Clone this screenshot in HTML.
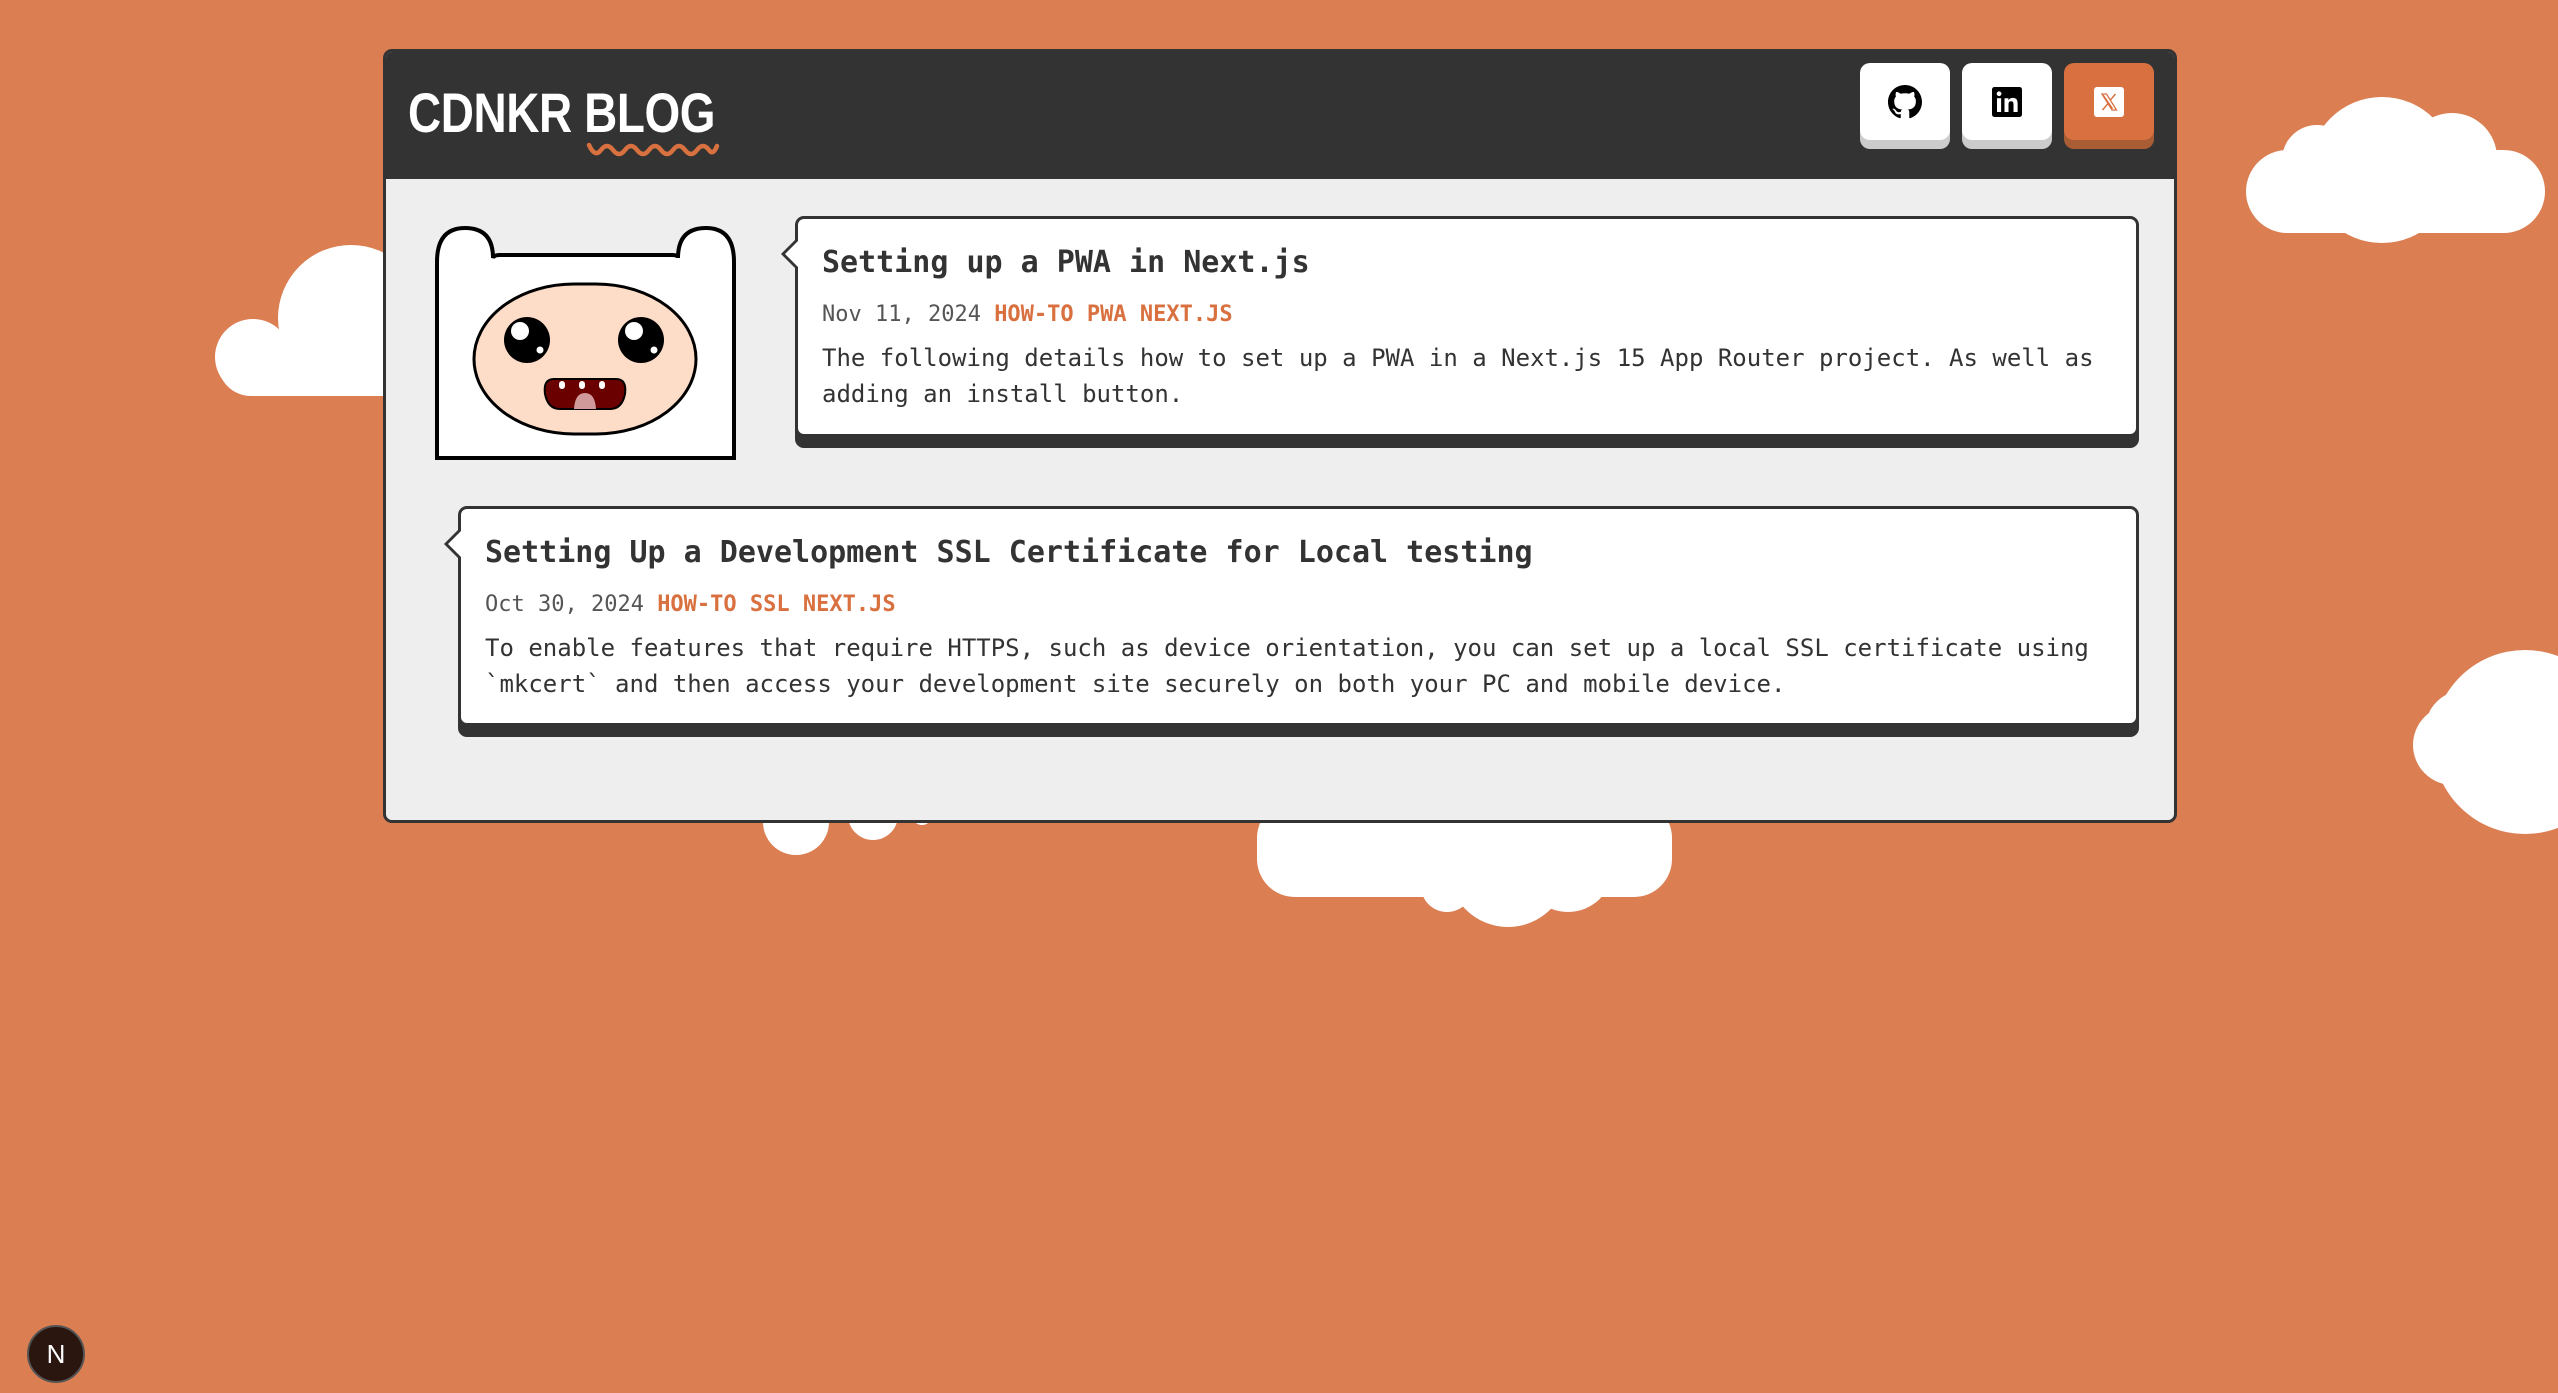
<!DOCTYPE html>
<html><head><meta charset="utf-8"><style>
*{box-sizing:border-box;margin:0;padding:0}
body{width:2558px;height:1393px;background:#db7e52;position:relative;overflow:hidden;font-family:"DejaVu Sans Mono","Liberation Mono",monospace}
.c{position:absolute;background:#fff;border-radius:50%}
.r{position:absolute;background:#fff}
#card{position:absolute;left:383px;top:49px;width:1794px;height:774px;background:#eee;border:3px solid #333;border-radius:9px;overflow:hidden}
#hdr{position:absolute;left:0;top:0;right:0;height:127px;background:#333}
#title{position:absolute;left:22px;top:28px;font-family:"Liberation Sans",sans-serif;font-weight:bold;font-size:56px;color:#fff;transform:scaleX(.82);transform-origin:left;letter-spacing:-0.5px}
.btn{position:absolute;top:11px;width:90px;height:77px;border-radius:10px;background:#fff;box-shadow:0 9px 0 #ccc;display:flex;align-items:center;justify-content:center}
.post{position:absolute;background:#fff;border:3px solid #333;border-radius:9px;box-shadow:0 11px 0 #333}
.post h2{font-size:30px;font-weight:bold;color:#333}
.meta{font-size:22px;color:#555;margin-top:22px}
.meta b{color:#d9703f}
.desc{font-size:24px;color:#333;line-height:36px;margin-top:13px}
.tail{position:absolute;left:-17px;width:0;height:0;border-top:17px solid transparent;border-bottom:17px solid transparent;border-right:17px solid #333}
.tail i{position:absolute;left:4px;top:-13px;border-top:13px solid transparent;border-bottom:13px solid transparent;border-right:13px solid #fff}
</style></head><body>
<div class="c" style="left:278px;top:245px;width:146px;height:146px"></div>
<div class="c" style="left:215px;top:319px;width:76px;height:76px"></div>
<div class="r" style="left:218px;top:330px;width:220px;height:66px;border-radius:38px"></div>
<div class="c" style="left:2309px;top:97px;width:146px;height:146px"></div>
<div class="c" style="left:2407px;top:113px;width:90px;height:90px"></div>
<div class="c" style="left:2282px;top:125px;width:70px;height:70px"></div>
<div class="r" style="left:2246px;top:150px;width:299px;height:83px;border-radius:42px"></div>
<div class="c" style="left:2433px;top:650px;width:184px;height:184px"></div>
<div class="c" style="left:2413px;top:705px;width:80px;height:80px"></div>
<div class="c" style="left:2425px;top:690px;width:80px;height:80px"></div>
<div class="r" style="left:1257px;top:800px;width:415px;height:97px;border-radius:38px"></div>
<div class="c" style="left:1421px;top:860px;width:52px;height:52px"></div>
<div class="c" style="left:1448px;top:807px;width:120px;height:120px"></div>
<div class="c" style="left:1523px;top:822px;width:90px;height:90px"></div>
<div class="c" style="left:763px;top:789px;width:66px;height:66px"></div>
<div class="c" style="left:848px;top:790px;width:50px;height:50px"></div>
<div class="c" style="left:912px;top:805px;width:20px;height:20px"></div>

<div id="card">
 <div id="hdr">
  <div id="title">CDNKR BLOG</div>
  <svg style="position:absolute;left:200px;top:88px" width="134" height="20" viewBox="0 0 134 20"><path d="M3 5 Q9 18 15 10 Q21 2 27 10 Q33 18 39 10 Q45 2 51 10 Q57 18 63 10 Q69 2 75 10 Q81 18 87 10 Q93 2 99 10 Q105 18 111 10 Q117 2 123 10 Q127 16 131 6" fill="none" stroke="#d9703f" stroke-width="4.5" stroke-linecap="round"/></svg>
  <div class="btn" style="left:1474px"><svg width="34" height="34" viewBox="0 0 16 16"><path fill="#000" d="M8 0C3.58 0 0 3.58 0 8c0 3.54 2.290 6.53 5.470 7.590.4.07.55-.17.55-.38 0-.19-.01-.82-.01-1.49-2.010.37-2.530-.49-2.690-.94-.09-.23-.48-.94-.82-1.130-.28-.15-.68-.52-.01-.53.63-.01 1.080.58 1.230.82.72 1.210 1.870.87 2.330.66.07-.52.28-.87.51-1.070-1.780-.2-3.640-.89-3.640-3.950 0-.87.31-1.590.82-2.150-.08-.2-.36-1.020.08-2.120 0 0 .67-.21 2.2.82.64-.18 1.320-.27 2-.27.68 0 1.360.09 2 .27 1.530-1.040 2.2-.82 2.2-.82.44 1.1.16 1.920.08 2.120.51.56.82 1.270.82 2.150 0 3.070-1.870 3.750-3.650 3.950.29.25.54.73.54 1.480 0 1.070-.01 1.930-.01 2.2 0 .21.15.46.55.38A8.013 8.013 0 0016 8c0-4.420-3.580-8-8-8z"/></svg></div>
  <div class="btn" style="left:1576px"><svg width="30" height="30" viewBox="0 0 24 24"><rect width="24" height="24" rx="2" fill="#000"/><rect x="4" y="9" width="3.3" height="11" fill="#fff"/><circle cx="5.65" cy="5.4" r="1.9" fill="#fff"/><path d="M10 9h3.1v1.6c.5-.9 1.7-1.9 3.5-1.9 3.3 0 3.9 2.1 3.9 4.9V20h-3.3v-5.6c0-1.3 0-3-1.9-3s-2.1 1.4-2.1 2.9V20H10z" fill="#fff"/></svg></div>
  <div class="btn" style="left:1678px;background:#d87040;box-shadow:0 9px 0 #a85d35"><svg width="30" height="30" viewBox="0 0 30 30"><rect width="30" height="30" rx="3" fill="#fff"/><path d="M8 7h4.5l10 16H18z M9.3 8.2l9.3 13.6" fill="none" stroke="#d87040" stroke-width="1.3"/><path d="M21.5 7L16.2 13.2M8.5 23l5.3-6.2" stroke="#d87040" stroke-width="1.5"/></svg></div>
 </div>
 <svg style="position:absolute;left:48px;top:174px" width="305" height="235" viewBox="0 0 305 235">
  <path d="M3 232 V36 Q3 2 31 2 Q59 2 59 32 Q60 29 66 29 H238 Q244 29 244 32 Q244 2 272 2 Q300 2 300 36 V232 Z" fill="#fff" stroke="#000" stroke-width="4"/>
  <path d="M3 38 V232 H300 V38" fill="none" stroke="#000" stroke-width="4"/>
  <rect x="40" y="58" width="222" height="150" rx="100" ry="75" fill="#fddcc8" stroke="#000" stroke-width="3"/>
  <circle cx="93" cy="114" r="23" fill="#000"/><circle cx="86" cy="105" r="9" fill="#fff"/><circle cx="106" cy="124" r="3.5" fill="#fff"/>
  <circle cx="207" cy="114" r="23" fill="#000"/><circle cx="200" cy="105" r="9" fill="#fff"/><circle cx="220" cy="124" r="3.5" fill="#fff"/>
  <path d="M120 153 H182 Q193 153 191 168 Q188 183 176 183 H126 Q114 183 111 168 Q109 153 120 153Z" fill="#6b0000" stroke="#000" stroke-width="2"/>
  <path d="M140 183 Q141 167 151 167 Q161 167 162 183Z" fill="#d09a9a"/>
  <rect x="125" y="155" width="6" height="8" rx="3" fill="#fff"/><rect x="145" y="155" width="6" height="8" rx="3" fill="#fff"/><rect x="165" y="155" width="6" height="8" rx="3" fill="#fff"/>
 </svg>
 <div class="post" style="left:409px;top:164px;width:1344px;height:221px;padding:26px 24px">
  <div class="tail" style="top:18px"><i></i></div>
  <h2>Setting up a PWA in Next.js</h2>
  <div class="meta">Nov 11, 2024 <b>HOW-TO PWA NEXT.JS</b></div>
  <div class="desc">The following details how to set up a PWA in a Next.js 15 App Router project. As well as adding an install button.</div>
 </div>
 <div class="post" style="left:72px;top:454px;width:1681px;height:220px;padding:26px 24px">
  <div class="tail" style="top:18px"><i></i></div>
  <h2>Setting Up a Development SSL Certificate for Local testing</h2>
  <div class="meta">Oct 30, 2024 <b>HOW-TO SSL NEXT.JS</b></div>
  <div class="desc">To enable features that require HTTPS, such as device orientation, you can set up a local SSL certificate using `mkcert` and then access your development site securely on both your PC and mobile device.</div>
 </div>
</div>
<div style="position:absolute;left:27px;top:1325px;width:58px;height:58px;border-radius:50%;background:#2a160e;border:2px solid #555;color:#fff;font-family:'Liberation Sans',sans-serif;font-size:26px;display:flex;align-items:center;justify-content:center">N</div>
</body></html>
